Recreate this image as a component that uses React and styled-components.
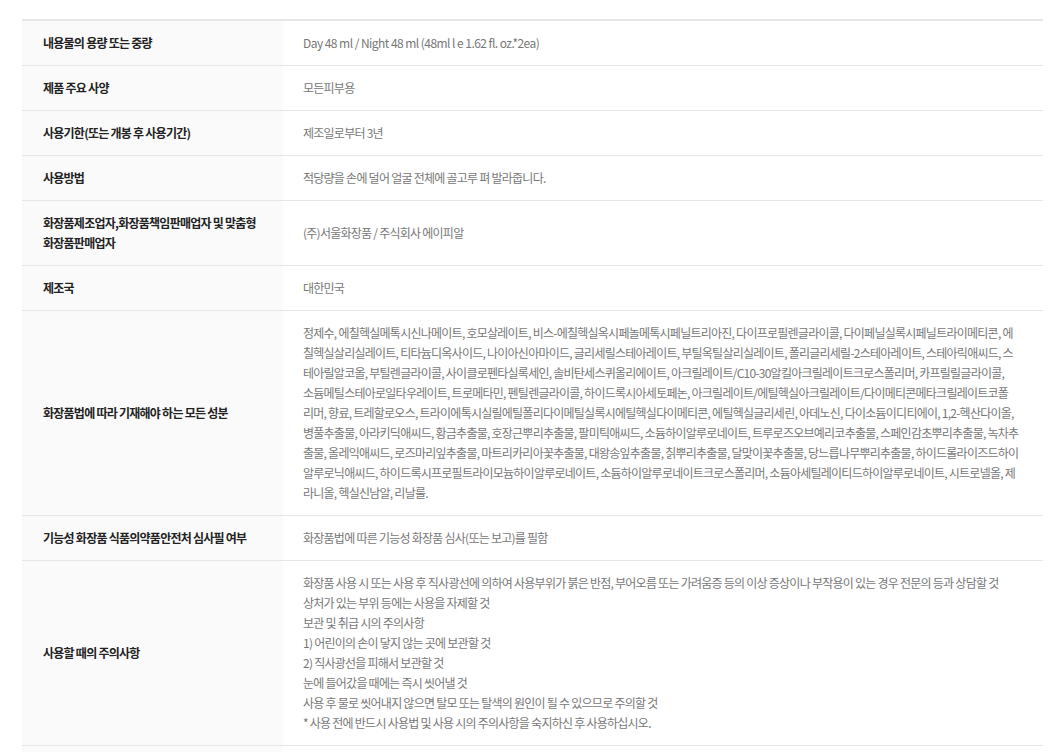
import styled, { createGlobalStyle } from "styled-components";

const GlobalStyle = createGlobalStyle`
  body {
    margin: 0;
    background: #ffffff;
    font-family: "Noto Sans CJK KR", "Noto Sans", sans-serif;
  }
`;

const Wrapper = styled.div`
  padding: 19px 16px 0 22px;
`;

const InfoTable = styled.table`
  width: 1021px;
  border-collapse: collapse;
  border-top: 2px solid #e6e6e6;
  table-layout: fixed;
`;

const Row = styled.tr`
  border-bottom: 1px solid #e6e6e6;
`;

const HeadCell = styled.th`
  width: 261px;
  box-sizing: border-box;
  padding: 12px 6px 12px 21px;
  background: #fafafa;
  text-align: left;
  vertical-align: middle;
  font-size: 12px;
  line-height: 20px;
  font-weight: 700;
  color: #222222;
  letter-spacing: -0.75px;
`;

const ValueCell = styled.td`
  padding: 12px 20px;
  text-align: left;
  vertical-align: middle;
  font-size: 12px;
  line-height: 20px;
  font-weight: 400;
  color: #777777;
  letter-spacing: ${(p) => (p.$latin ? "-0.55px" : "-0.75px")};
`;

const Line = styled.span`
  display: block;
  white-space: nowrap;
`;

const ingredients = [
  "정제수, 에칠헥실메톡시신나메이트, 호모살레이트, 비스-에칠헥실옥시페놀메톡시페닐트리아진, 다이프로필렌글라이콜, 다이페닐실록시페닐트라이메티콘, 에",
  "칠헥실살리실레이트, 티타늄디옥사이드, 나이아신아마이드, 글리세릴스테아레이트, 부틸옥틸살리실레이트, 폴리글리세릴-2스테아레이트, 스테아릭애씨드, 스",
  "테아릴알코올, 부틸렌글라이콜, 사이클로펜타실록세인, 솔비탄세스퀴올리에이트, 아크릴레이트/C10-30알킬아크릴레이트크로스폴리머, 카프릴릴글라이콜,",
  "소듐메틸스테아로일타우레이트, 트로메타민, 펜틸렌글라이콜, 하이드록시아세토페논, 아크릴레이트/에틸헥실아크릴레이트/다이메티콘메타크릴레이트코폴",
  "리머, 향료, 트레할로오스, 트라이에톡시실릴에틸폴리다이메틸실록시에틸헥실다이메티콘, 에틸헥실글리세린, 아데노신, 다이소듐이디티에이, 1,2-헥산다이올,",
  "병풀추출물, 아라키딕애씨드, 황금추출물, 호장근뿌리추출물, 팔미틱애씨드, 소듐하이알루로네이트, 트루로즈오브예리코추출물, 스페인감초뿌리추출물, 녹차추",
  "출물, 올레익애씨드, 로즈마리잎추출물, 마트리카리아꽃추출물, 대왕송잎추출물, 칡뿌리추출물, 달맞이꽃추출물, 당느릅나무뿌리추출물, 하이드롤라이즈드하이",
  "알루로닉애씨드, 하이드록시프로필트라이모늄하이알루로네이트, 소듐하이알루로네이트크로스폴리머, 소듐아세틸레이티드하이알루로네이트, 시트로넬올, 제",
  "라니올, 헥실신남알, 리날룰.",
];

const cautions = [
  "화장품 사용 시 또는 사용 후 직사광선에 의하여 사용부위가 붉은 반점, 부어오름 또는 가려움증 등의 이상 증상이나 부작용이 있는 경우 전문의 등과 상담할 것",
  "상처가 있는 부위 등에는 사용을 자제할 것",
  "보관 및 취급 시의 주의사항",
  "1) 어린이의 손이 닿지 않는 곳에 보관할 것",
  "2) 직사광선을 피해서 보관할 것",
  "눈에 들어갔을 때에는 즉시 씻어낼 것",
  "사용 후 물로 씻어내지 않으면 탈모 또는 탈색의 원인이 될 수 있으므로 주의할 것",
  "* 사용 전에 반드시 사용법 및 사용 시의 주의사항을 숙지하신 후 사용하십시오.",
];

const rows = [
  { label: ["내용물의 용량 또는 중량"], value: ["Day 48 ml / Night 48 ml (48ml l e 1.62 fl. oz.*2ea)"], latin: true },
  { label: ["제품 주요 사양"], value: ["모든피부용"] },
  { label: ["사용기한(또는 개봉 후 사용기간)"], value: ["제조일로부터 3년"] },
  { label: ["사용방법"], value: ["적당량을 손에 덜어 얼굴 전체에 골고루 펴 발라줍니다."] },
  { label: ["화장품제조업자,화장품책임판매업자 및 맞춤형", "화장품판매업자"], value: ["(주)서울화장품 / 주식회사 에이피알"] },
  { label: ["제조국"], value: ["대한민국"] },
  { label: ["화장품법에 따라 기재해야 하는 모든 성분"], value: ingredients },
  { label: ["기능성 화장품 식품의약품안전처 심사필 여부"], value: ["화장품법에 따른 기능성 화장품 심사(또는 보고)를 필함"] },
  { label: ["사용할 때의 주의사항"], value: cautions },
  { label: ["품질보증기준"], value: ["본 제품은 공정거래위원회 고시 소비자분쟁해결기준에 의거 교환 또는 보상 받을 수 있습니다."] },
];

const App = () => {
  return (
    <>
      <GlobalStyle />
      <Wrapper>
        <InfoTable>
          <tbody>
            {rows.map((row) => (
              <Row key={row.label[0]}>
                <HeadCell>
                  {row.label.map((text) => (
                    <Line key={text}>{text}</Line>
                  ))}
                </HeadCell>
                <ValueCell $latin={row.latin}>
                  {row.value.map((text) => (
                    <Line key={text}>{text}</Line>
                  ))}
                </ValueCell>
              </Row>
            ))}
          </tbody>
        </InfoTable>
      </Wrapper>
    </>
  );
};

export default App;
